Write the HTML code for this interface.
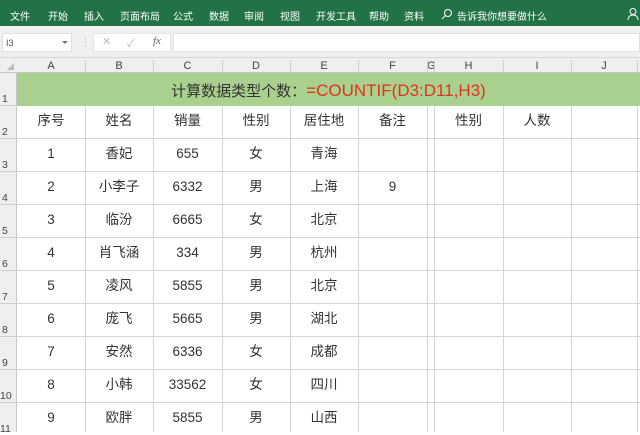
<!DOCTYPE html>
<html><head><meta charset="utf-8"><style>
*{margin:0;padding:0;box-sizing:border-box}
body{width:640px;height:432px;overflow:hidden;background:#fff;font-family:"Liberation Sans","Noto Sans CJK SC",sans-serif;position:relative}
.a{position:absolute}
.tab{position:absolute;top:8px;font-size:10px;color:#fff;white-space:nowrap}
.cell{position:absolute;text-align:center;font-size:13.5px;color:#333;line-height:30px}
.hl{position:absolute;background:#d4d4d4}
.rh{position:absolute;left:0;width:17px;font-size:10.5px;color:#444;text-align:left;padding-left:2px}
.ch{position:absolute;top:58px;height:15px;font-size:11px;color:#444;text-align:center;line-height:16px}
</style></head><body>
<div class="a" style="left:0;top:0;width:640px;height:26px;background:#217346"></div>
<div class="tab" style="left:10px">文件</div>
<div class="tab" style="left:48px">开始</div>
<div class="tab" style="left:84px">插入</div>
<div class="tab" style="left:120px">页面布局</div>
<div class="tab" style="left:173px">公式</div>
<div class="tab" style="left:209px">数据</div>
<div class="tab" style="left:244px">审阅</div>
<div class="tab" style="left:280px">视图</div>
<div class="tab" style="left:316px">开发工具</div>
<div class="tab" style="left:369px">帮助</div>
<div class="tab" style="left:404px">资料</div>
<svg class="a" style="left:441px;top:8px" width="12" height="12"><circle cx="7" cy="5" r="3.5" fill="none" stroke="#fff" stroke-width="1"/><line x1="4.5" y1="7.5" x2="1" y2="11" stroke="#fff"/></svg>
<div class="tab" style="left:457px">告诉我你想要做什么</div>
<svg class="a" style="left:627px;top:7px" width="13" height="14"><circle cx="6" cy="4.5" r="3" fill="none" stroke="#fff"/><path d="M1 13c0-4 3-5 5-5s5 1 5 5" fill="none" stroke="#fff"/></svg>
<div class="a" style="left:0;top:26px;width:640px;height:32px;background:#f0f0f0;border-bottom:1px solid #d6d6d6"></div>
<div class="a" style="left:2px;top:33px;width:70px;height:19px;background:#fff;border:1px solid #e0e0e0;font-size:9px;color:#555;padding:4px 3px">I3</div>
<div class="a" style="left:62px;top:41px;width:0;height:0;border-left:3px solid transparent;border-right:3px solid transparent;border-top:3px solid #777"></div>
<div class="a" style="left:81px;top:37px;color:#aaa;font-size:9px">⋮</div>
<div class="a" style="left:93px;top:33px;width:78px;height:19px;background:#fff;border:1px solid #e6e6e6"></div>
<div class="a" style="left:102px;top:35px;color:#bbb;font-size:11px">✕</div>
<div class="a" style="left:127px;top:35px;color:#bbb;font-size:11px">✓</div>
<div class="a" style="left:153px;top:35px;color:#666;font-size:11px;font-style:italic;font-family:'Liberation Serif',serif">fx</div>
<div class="a" style="left:173px;top:33px;width:467px;height:19px;background:#fff;border:1px solid #e0e0e0"></div>
<div class="a" style="left:0;top:58px;width:640px;height:15px;background:#efefef;border-bottom:1px solid #c8c8c8"></div>
<div class="a" style="left:0;top:73px;width:17px;height:359px;background:#efefef;border-right:1px solid #c8c8c8"></div>
<div class="a" style="left:7px;top:63px;width:0;height:0;border-left:7px solid transparent;border-bottom:7px solid #bbb"></div>
<div class="ch" style="left:17px;width:68px">A</div>
<div class="ch" style="left:85px;width:68px">B</div>
<div class="ch" style="left:153px;width:69px">C</div>
<div class="ch" style="left:222px;width:68px">D</div>
<div class="ch" style="left:290px;width:68px">E</div>
<div class="ch" style="left:358px;width:69px">F</div>
<div class="ch" style="left:427px;width:7px">G</div>
<div class="ch" style="left:434px;width:69px">H</div>
<div class="ch" style="left:503px;width:68px">I</div>
<div class="ch" style="left:571px;width:66px">J</div>
<div class="a" style="left:85px;top:60px;width:1px;height:12px;background:#d0d0d0;box-shadow:68px 0 #d0d0d0,137px 0 #d0d0d0,205px 0 #d0d0d0,273px 0 #d0d0d0,342px 0 #d0d0d0,349px 0 #d0d0d0,418px 0 #d0d0d0,486px 0 #d0d0d0,552px 0 #d0d0d0"></div>
<div class="a" style="left:17px;top:73px;width:623px;height:33px;background:#a9d08e"></div>
<div class="a" style="left:17px;top:80px;width:623px;text-align:center;font-size:15px;color:#333;white-space:nowrap">计算数据类型个数：<span style="color:#e0321e;font-size:17px">=COUNTIF(D3:D11,H3)</span></div>
<!-- grid lines -->
<div class="hl" style="left:17px;top:138px;width:623px;height:1px"></div>
<div class="hl" style="left:17px;top:171px;width:623px;height:1px"></div>
<div class="hl" style="left:17px;top:204px;width:623px;height:1px"></div>
<div class="hl" style="left:17px;top:237px;width:623px;height:1px"></div>
<div class="hl" style="left:17px;top:270px;width:623px;height:1px"></div>
<div class="hl" style="left:17px;top:303px;width:623px;height:1px"></div>
<div class="hl" style="left:17px;top:336px;width:623px;height:1px"></div>
<div class="hl" style="left:17px;top:369px;width:623px;height:1px"></div>
<div class="hl" style="left:17px;top:402px;width:623px;height:1px"></div>
<div class="hl" style="left:85px;top:106px;width:1px;height:326px"></div>
<div class="hl" style="left:153px;top:106px;width:1px;height:326px"></div>
<div class="hl" style="left:222px;top:106px;width:1px;height:326px"></div>
<div class="hl" style="left:290px;top:106px;width:1px;height:326px"></div>
<div class="hl" style="left:358px;top:106px;width:1px;height:326px"></div>
<div class="hl" style="left:427px;top:106px;width:1px;height:326px"></div>
<div class="hl" style="left:434px;top:106px;width:1px;height:326px"></div>
<div class="hl" style="left:503px;top:106px;width:1px;height:326px"></div>
<div class="hl" style="left:571px;top:106px;width:1px;height:326px"></div>
<div class="hl" style="left:637px;top:106px;width:1px;height:326px"></div>
<!-- row headers -->
<div class="rh" style="top:93px">1</div>
<div class="rh" style="top:126px">2</div>
<div class="rh" style="top:159px">3</div>
<div class="rh" style="top:192px">4</div>
<div class="rh" style="top:225px">5</div>
<div class="rh" style="top:258px">6</div>
<div class="rh" style="top:291px">7</div>
<div class="rh" style="top:324px">8</div>
<div class="rh" style="top:357px">9</div>
<div class="rh" style="top:390px;padding-left:0">10</div>
<div class="rh" style="top:423px;padding-left:0">11</div>
<div class="a" style="left:0;top:105px;width:17px;height:1px;background:#d0d0d0;box-shadow:0 33px #d0d0d0,0 66px #d0d0d0,0 99px #d0d0d0,0 132px #d0d0d0,0 165px #d0d0d0,0 198px #d0d0d0,0 231px #d0d0d0,0 264px #d0d0d0,0 297px #d0d0d0"></div>
<div id="g"></div>
<!-- data -->
<div style="position:absolute;left:0;top:106px">
<div class="cell" style="left:17px;top:0;width:68px">序号</div><div class="cell" style="left:85px;top:0;width:68px">姓名</div><div class="cell" style="left:153px;top:0;width:69px">销量</div><div class="cell" style="left:222px;top:0;width:68px">性别</div><div class="cell" style="left:290px;top:0;width:68px">居住地</div><div class="cell" style="left:358px;top:0;width:69px">备注</div><div class="cell" style="left:434px;top:0;width:69px">性别</div><div class="cell" style="left:503px;top:0;width:68px">人数</div>
<div class="cell" style="left:17px;top:33px;width:68px">1</div><div class="cell" style="left:85px;top:33px;width:68px">香妃</div><div class="cell" style="left:153px;top:33px;width:69px">655</div><div class="cell" style="left:222px;top:33px;width:68px">女</div><div class="cell" style="left:290px;top:33px;width:68px">青海</div>
<div class="cell" style="left:17px;top:66px;width:68px">2</div><div class="cell" style="left:85px;top:66px;width:68px">小李子</div><div class="cell" style="left:153px;top:66px;width:69px">6332</div><div class="cell" style="left:222px;top:66px;width:68px">男</div><div class="cell" style="left:290px;top:66px;width:68px">上海</div><div class="cell" style="left:358px;top:66px;width:69px">9</div>
<div class="cell" style="left:17px;top:99px;width:68px">3</div><div class="cell" style="left:85px;top:99px;width:68px">临汾</div><div class="cell" style="left:153px;top:99px;width:69px">6665</div><div class="cell" style="left:222px;top:99px;width:68px">女</div><div class="cell" style="left:290px;top:99px;width:68px">北京</div>
<div class="cell" style="left:17px;top:132px;width:68px">4</div><div class="cell" style="left:85px;top:132px;width:68px">肖飞涵</div><div class="cell" style="left:153px;top:132px;width:69px">334</div><div class="cell" style="left:222px;top:132px;width:68px">男</div><div class="cell" style="left:290px;top:132px;width:68px">杭州</div>
<div class="cell" style="left:17px;top:165px;width:68px">5</div><div class="cell" style="left:85px;top:165px;width:68px">凌风</div><div class="cell" style="left:153px;top:165px;width:69px">5855</div><div class="cell" style="left:222px;top:165px;width:68px">男</div><div class="cell" style="left:290px;top:165px;width:68px">北京</div>
<div class="cell" style="left:17px;top:198px;width:68px">6</div><div class="cell" style="left:85px;top:198px;width:68px">庞飞</div><div class="cell" style="left:153px;top:198px;width:69px">5665</div><div class="cell" style="left:222px;top:198px;width:68px">男</div><div class="cell" style="left:290px;top:198px;width:68px">湖北</div>
<div class="cell" style="left:17px;top:231px;width:68px">7</div><div class="cell" style="left:85px;top:231px;width:68px">安然</div><div class="cell" style="left:153px;top:231px;width:69px">6336</div><div class="cell" style="left:222px;top:231px;width:68px">女</div><div class="cell" style="left:290px;top:231px;width:68px">成都</div>
<div class="cell" style="left:17px;top:264px;width:68px">8</div><div class="cell" style="left:85px;top:264px;width:68px">小韩</div><div class="cell" style="left:153px;top:264px;width:69px">33562</div><div class="cell" style="left:222px;top:264px;width:68px">女</div><div class="cell" style="left:290px;top:264px;width:68px">四川</div>
<div class="cell" style="left:17px;top:297px;width:68px">9</div><div class="cell" style="left:85px;top:297px;width:68px">欧胖</div><div class="cell" style="left:153px;top:297px;width:69px">5855</div><div class="cell" style="left:222px;top:297px;width:68px">男</div><div class="cell" style="left:290px;top:297px;width:68px">山西</div>
</div>
</body></html>
